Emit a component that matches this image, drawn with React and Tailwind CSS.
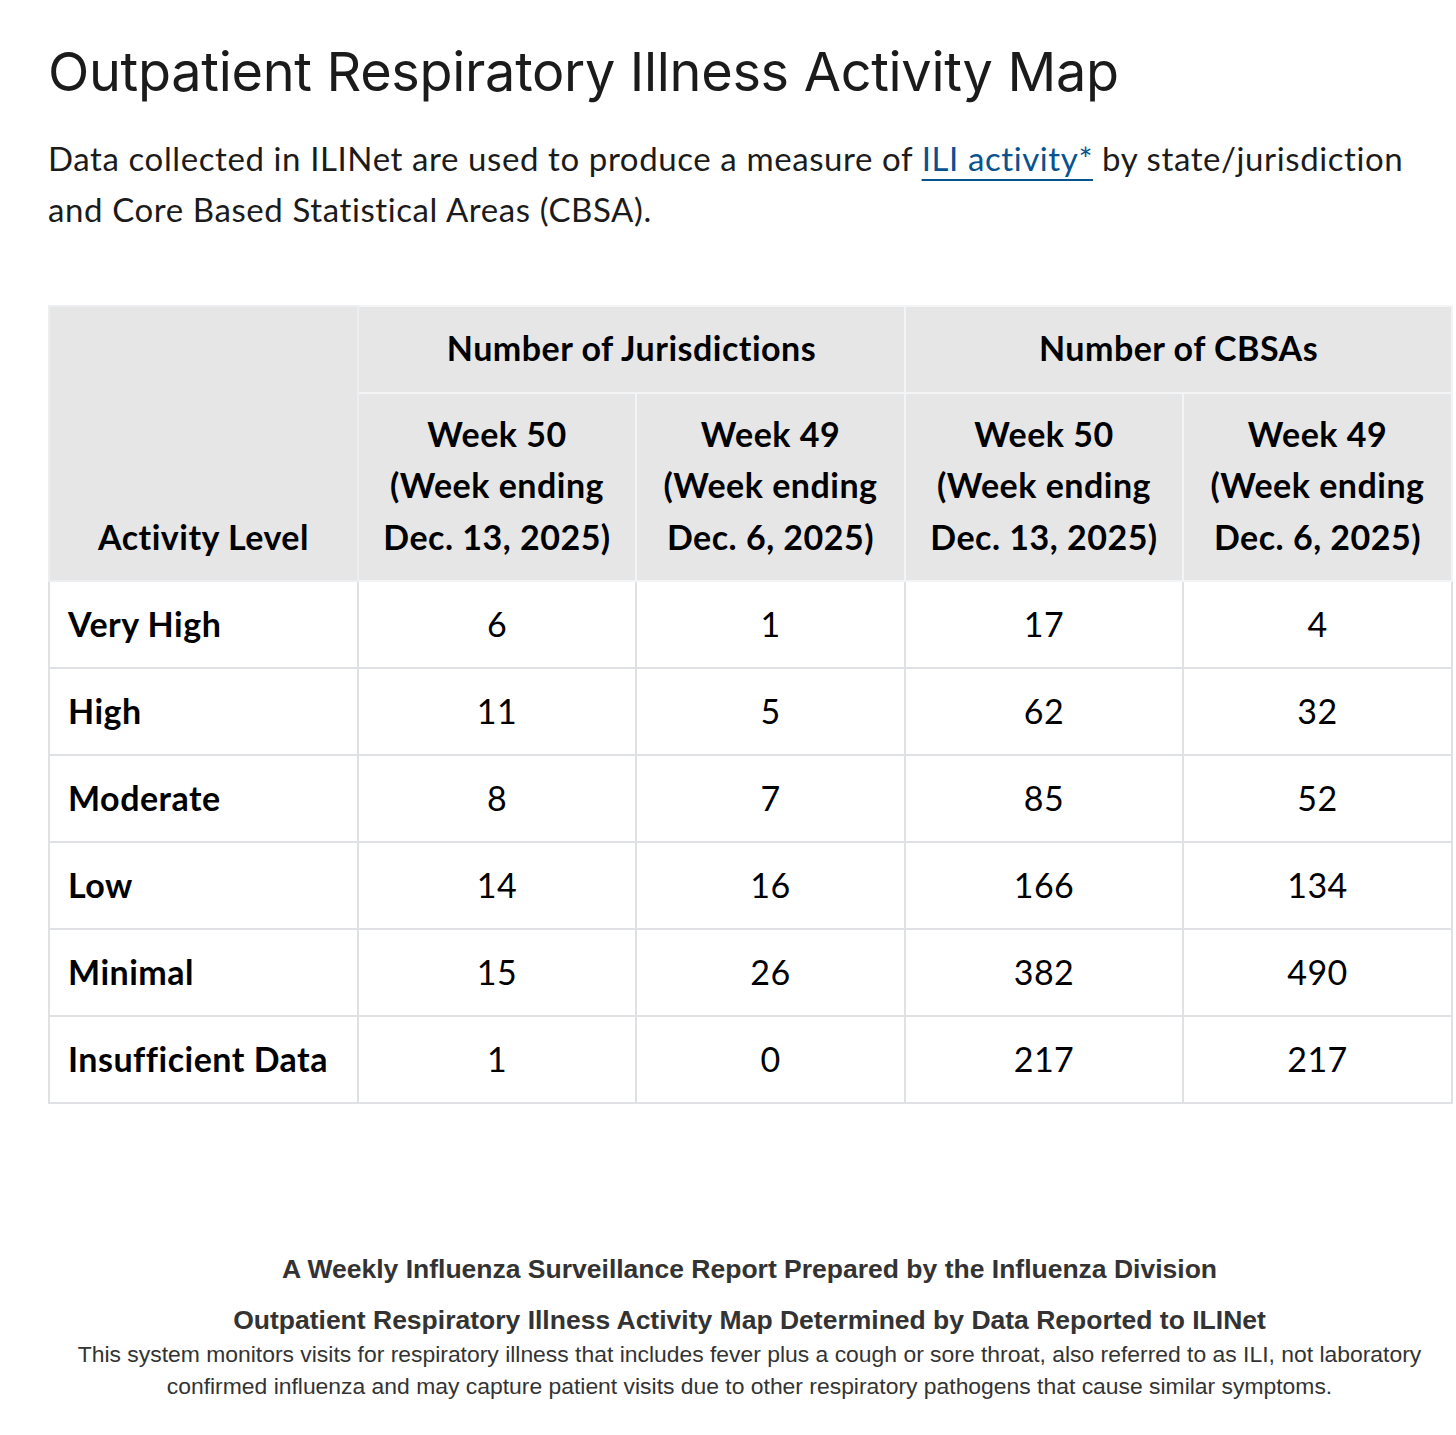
import React from "react";

const rows = [
  ["Very High", "6", "1", "17", "4"],
  ["High", "11", "5", "62", "32"],
  ["Moderate", "8", "7", "85", "52"],
  ["Low", "14", "16", "166", "134"],
  ["Minimal", "15", "26", "382", "490"],
  ["Insufficient Data", "1", "0", "217", "217"],
];

function WeekHead({ week, date }) {
  return (
    <th className="border-2 border-[#f3f4f6] bg-[#e6e6e6] px-[10px] pt-[14px] pb-[18px] text-center font-bold">
      Week {week}
      <br />
      (Week ending
      <br />
      {date})
    </th>
  );
}

export default function App() {
  return (
    <div className="min-h-[1435px] bg-white pl-[48px] pr-[5px] pt-[40px] text-[#1b1b1b]">
      <h1 className="font-['Inter',sans-serif] text-[54px] font-normal leading-[1.2] tracking-[-0.3px] text-[#1b1b1b]">
        Outpatient Respiratory Illness Activity Map
      </h1>
      <p className="mt-[28px] whitespace-nowrap font-['Lato',sans-serif] text-[33px] leading-[51px] tracking-[0.6px]">
        Data collected in ILINet are used to produce a measure of{" "}
        <a className="text-[#07528f] underline decoration-[2px] underline-offset-[8px]" href="#">
          ILI activity*
        </a>{" "}
        by state/jurisdiction
        <br />
        and Core Based Statistical Areas (CBSA).
      </p>

      <table className="mt-[70px] w-[1403px] table-fixed border-collapse font-['Lato',sans-serif] text-[34px] leading-[51.5px] tracking-[0.5px] text-black">
        <colgroup>
          <col className="w-[309px]" />
          <col className="w-[278px]" />
          <col className="w-[269px]" />
          <col className="w-[278px]" />
          <col className="w-[269px]" />
        </colgroup>
        <thead>
          <tr>
            <th
              rowSpan={2}
              className="border-2 border-[#eceef1] bg-[#e6e6e6] px-[10px] pb-[18px] text-center align-bottom font-bold"
            >
              Activity Level
            </th>
            <th colSpan={2} className="h-[87px] border-2 border-[#f3f4f6] bg-[#e6e6e6] pb-[4px] text-center font-bold">
              Number of Jurisdictions
            </th>
            <th colSpan={2} className="h-[87px] border-2 border-[#f3f4f6] bg-[#e6e6e6] pb-[4px] text-center font-bold">
              Number of CBSAs
            </th>
          </tr>
          <tr>
            <WeekHead week="50" date="Dec. 13, 2025" />
            <WeekHead week="49" date="Dec. 6, 2025" />
            <WeekHead week="50" date="Dec. 13, 2025" />
            <WeekHead week="49" date="Dec. 6, 2025" />
          </tr>
        </thead>
        <tbody>
          {rows.map((r) => (
            <tr key={r[0]}>
              <td className="h-[87px] whitespace-nowrap border-2 border-[#dfe1e5] px-[18px] pb-[3px] font-bold">{r[0]}</td>
              {r.slice(1).map((v, i) => (
                <td key={i} className="h-[87px] border-2 border-[#dfe1e5] pb-[3px] text-center">
                  {v}
                </td>
              ))}
            </tr>
          ))}
        </tbody>
      </table>

      <div className="mt-[149px] w-[1403px] text-center font-['Liberation_Sans',Arial,sans-serif] text-[#333333]">
        <p className="whitespace-nowrap text-[26.5px] font-bold leading-[32px]">
          A Weekly Influenza Surveillance Report Prepared by the Influenza Division
        </p>
        <p className="mt-[19px] whitespace-nowrap text-[26.5px] font-bold leading-[32px]">
          Outpatient Respiratory Illness Activity Map Determined by Data Reported to ILINet
        </p>
        <p className="mt-[1.5px] whitespace-nowrap text-[22.9px] leading-[32.5px]">
          This system monitors visits for respiratory illness that includes fever plus a cough or sore throat, also referred to as ILI, not laboratory
          <br />
          confirmed influenza and may capture patient visits due to other respiratory pathogens that cause similar symptoms.
        </p>
      </div>
    </div>
  );
}
